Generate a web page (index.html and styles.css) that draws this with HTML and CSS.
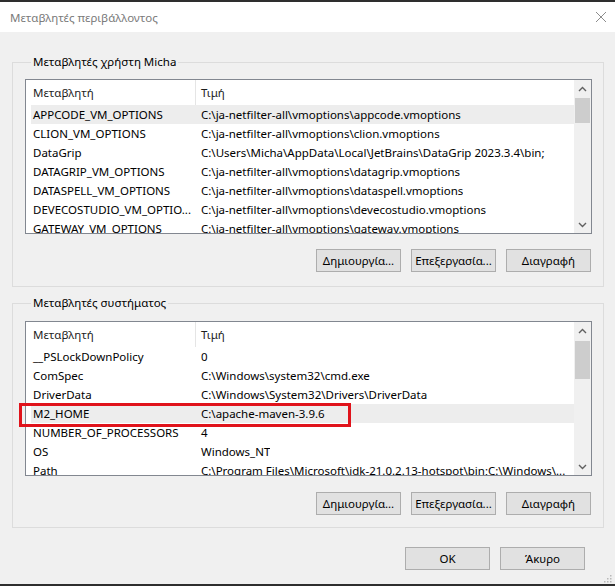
FILE: index.html
```html
<!DOCTYPE html>
<html lang="el">
<head>
<meta charset="utf-8">
<title>Μεταβλητές περιβάλλοντος</title>
<link rel="stylesheet" href="styles.css">
</head>
<body>
<div class="window">
  <div class="edge"></div>
  <header class="titlebar">
    <span class="title">Μεταβλητές περιβάλλοντος</span>
    <svg class="close" width="12" height="12" viewBox="0 0 12 12"><path d="M1 1 L11 11 M11 1 L1 11" stroke="#8c8c8c" stroke-width="1" fill="none"/></svg>
  </header>
  <main class="dialog">
    <fieldset class="group group-user">
      <legend>Μεταβλητές χρήστη Micha</legend>
      <div class="listwrap">
        <div class="listbox">
          <div class="listmain">
            <div class="listhead"><div class="hcell hc1">Μεταβλητή</div><div class="hcell hc2">Τιμή</div></div>
            <div class="rows">
              <div class="row sel"><span class="c1">APPCODE_VM_OPTIONS</span><span class="c2">C:\ja-netfilter-all\vmoptions\appcode.vmoptions</span></div>
              <div class="row"><span class="c1">CLION_VM_OPTIONS</span><span class="c2">C:\ja-netfilter-all\vmoptions\clion.vmoptions</span></div>
              <div class="row"><span class="c1">DataGrip</span><span class="c2">C:\Users\Micha\AppData\Local\JetBrains\DataGrip 2023.3.4\bin;</span></div>
              <div class="row"><span class="c1">DATAGRIP_VM_OPTIONS</span><span class="c2">C:\ja-netfilter-all\vmoptions\datagrip.vmoptions</span></div>
              <div class="row"><span class="c1">DATASPELL_VM_OPTIONS</span><span class="c2">C:\ja-netfilter-all\vmoptions\dataspell.vmoptions</span></div>
              <div class="row"><span class="c1">DEVECOSTUDIO_VM_OPTIO...</span><span class="c2">C:\ja-netfilter-all\vmoptions\devecostudio.vmoptions</span></div>
              <div class="row"><span class="c1">GATEWAY_VM_OPTIONS</span><span class="c2">C:\ja-netfilter-all\vmoptions\gateway.vmoptions</span></div>
            </div>
          </div>
          <div class="vscroll">
            <div class="sarrow"><svg width="9" height="6" viewBox="0 0 9 6"><path d="M1 5 L4.5 1.5 L8 5" stroke="#606060" stroke-width="1.4" fill="none"/></svg></div>
            <div class="track"><div class="thumb thumb-user"></div></div>
            <div class="sarrow"><svg width="9" height="6" viewBox="0 0 9 6"><path d="M1 1 L4.5 4.5 L8 1" stroke="#606060" stroke-width="1.4" fill="none"/></svg></div>
          </div>
        </div>
      </div>
      <div class="btnrow">
        <button class="btn">Δημιουργία...</button>
        <button class="btn">Επεξεργασία...</button>
        <button class="btn">Διαγραφή</button>
      </div>
    </fieldset>

    <fieldset class="group group-sys">
      <legend>Μεταβλητές συστήματος</legend>
      <div class="listwrap">
        <div class="listbox">
          <div class="listmain">
            <div class="listhead"><div class="hcell hc1">Μεταβλητή</div><div class="hcell hc2">Τιμή</div></div>
            <div class="rows">
              <div class="row"><span class="c1">__PSLockDownPolicy</span><span class="c2">0</span></div>
              <div class="row"><span class="c1">ComSpec</span><span class="c2">C:\Windows\system32\cmd.exe</span></div>
              <div class="row"><span class="c1">DriverData</span><span class="c2">C:\Windows\System32\Drivers\DriverData</span></div>
              <div class="row sel"><span class="c1">M2_HOME</span><span class="c2">C:\apache-maven-3.9.6</span></div>
              <div class="row"><span class="c1">NUMBER_OF_PROCESSORS</span><span class="c2">4</span></div>
              <div class="row"><span class="c1">OS</span><span class="c2">Windows_NT</span></div>
              <div class="row"><span class="c1">Path</span><span class="c2">C:\Program Files\Microsoft\jdk-21.0.2.13-hotspot\bin;C:\Windows\...</span></div>
            </div>
          </div>
          <div class="vscroll">
            <div class="sarrow"><svg width="9" height="6" viewBox="0 0 9 6"><path d="M1 5 L4.5 1.5 L8 5" stroke="#606060" stroke-width="1.4" fill="none"/></svg></div>
            <div class="track"><div class="thumb thumb-sys"></div></div>
            <div class="sarrow"><svg width="9" height="6" viewBox="0 0 9 6"><path d="M1 1 L4.5 4.5 L8 1" stroke="#606060" stroke-width="1.4" fill="none"/></svg></div>
          </div>
        </div>
        <div class="mark"></div>
      </div>
      <div class="btnrow">
        <button class="btn">Δημιουργία...</button>
        <button class="btn">Επεξεργασία...</button>
        <button class="btn">Διαγραφή</button>
      </div>
    </fieldset>

    <div class="dlgbtns">
      <button class="btn">OK</button>
      <button class="btn">Άκυρο</button>
    </div>
  </main>
  <div class="edge"></div>
  <svg class="grip" width="10" height="10" viewBox="0 0 10 10">
    <rect x="8" y="2" width="1.5" height="1.5" fill="#b8b8b8"/>
    <rect x="5" y="5" width="1.5" height="1.5" fill="#b8b8b8"/>
    <rect x="8" y="5" width="1.5" height="1.5" fill="#b8b8b8"/>
    <rect x="2" y="8" width="1.5" height="1.5" fill="#b8b8b8"/>
    <rect x="5" y="8" width="1.5" height="1.5" fill="#b8b8b8"/>
    <rect x="8" y="8" width="1.5" height="1.5" fill="#b8b8b8"/>
  </svg>
</div>
</body>
</html>
```

FILE: styles.css
```css
* { box-sizing: border-box; }
html, body { margin: 0; padding: 0; }
body {
  font-family: "Noto Sans", "Liberation Sans", sans-serif;
  font-size: 11.5px;
  color: #000;
  background: #f0f0f0;
}
.window {
  position: relative;
  width: 615px;
  height: 586px;
  display: flex;
  flex-direction: column;
  background: #f0f0f0;
  overflow: hidden;
}
.edge {
  height: 2px;
  background: #2e2e2e;
  flex: none;
}
.titlebar {
  height: 30px;
  flex: none;
  background: #fff;
  display: flex;
  align-items: center;
  justify-content: space-between;
  padding: 0 8px 0 10px;
}
.title {
  color: #7a7a7a;
  font-size: 11.5px;
}
.close { display: block; }
.dialog {
  flex: 1;
  display: flex;
  flex-direction: column;
  padding: 22px 11px 0 12px;
}
.group {
  margin: 0;
  border: 1px solid #dcdcdc;
  padding: 9px 11px 14px 12px;
  min-width: 0;
}
.group-sys {
  margin-top: 8px;
  padding-top: 10px;
  padding-bottom: 12px;
}
.group legend {
  margin-left: 6px;
  padding: 0 2px;
  line-height: 16px;
  font-size: 11.5px;
}
.listwrap { position: relative; }
.listbox {
  height: 155px;
  border: 1px solid #828790;
  background: #fff;
  display: flex;
  overflow: hidden;
}
.listmain {
  flex: 1;
  min-width: 0;
  display: flex;
  flex-direction: column;
}
.listhead {
  height: 25px;
  flex: none;
  display: flex;
}
.hcell {
  display: flex;
  align-items: center;
  white-space: nowrap;
  color: #1e1e1e;
}
.hc1 {
  width: 170px;
  padding-left: 7px;
  border-right: 1px solid #e5e5e5;
}
.hc2 { padding-left: 5px; }
.rows { overflow: hidden; flex: 1; }
.row {
  height: 19px;
  margin-left: 5px;
  display: flex;
  align-items: center;
  white-space: nowrap;
}
.row.sel { background: #ededed; }
.c1 {
  width: 168px;
  flex: none;
  padding-left: 2px;
  overflow: hidden;
}
.c2 {
  padding-left: 2px;
  overflow: hidden;
}
.vscroll {
  width: 17px;
  flex: none;
  background: #f0f0f0;
  display: flex;
  flex-direction: column;
}
.sarrow {
  height: 17px;
  flex: none;
  display: flex;
  align-items: center;
  justify-content: center;
}
.sarrow svg { display: block; }
.track { flex: 1; }
.thumb {
  margin: 0 1px;
  background: #cdcdcd;
}
.thumb-user { margin-top: 1px; height: 25px; }
.thumb-sys { margin-top: 2px; height: 38px; }
.mark {
  position: absolute;
  left: -6px;
  top: 82px;
  width: 332px;
  height: 24px;
  border: 3px solid #e0131b;
}
.btnrow {
  display: flex;
  justify-content: flex-end;
  gap: 10px;
  margin-top: 15px;
  padding-right: 1px;
}
.group-sys .btnrow { margin-top: 16px; }
.btn {
  width: 85px;
  height: 23px;
  padding: 0;
  margin: 0;
  border: 1px solid #adadad;
  background: #e1e1e1;
  font-family: "Noto Sans", "Liberation Sans", sans-serif;
  font-size: 11.5px;
  color: #000;
}
.dlgbtns {
  display: flex;
  justify-content: flex-end;
  gap: 10px;
  margin-top: 19px;
  padding-right: 19px;
}
.grip {
  position: absolute;
  right: 3px;
  bottom: 3px;
}
```
